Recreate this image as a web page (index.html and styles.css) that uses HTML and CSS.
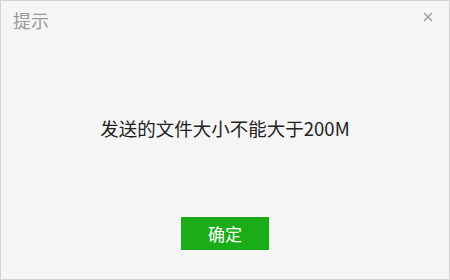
FILE: index.html
```html
<!DOCTYPE html>
<html>
<head>
<meta charset="utf-8">
<link rel="stylesheet" href="styles.css">
</head>
<body>
<div class="dialog">
  <div class="header">
    <span class="title">提示</span>
    <span class="close">
      <svg width="10" height="10" viewBox="0 0 10 10"><path d="M1 1L9 9M9 1L1 9" stroke="#999" stroke-width="1.4" fill="none"/></svg>
    </span>
  </div>
  <div class="content">发送的文件大小不能大于200M</div>
  <div class="footer">
    <button class="btn">确定</button>
  </div>
</div>
</body>
</html>
```
FILE: styles.css
```css
html, body {
  margin: 0;
  padding: 0;
}
body {
  font-family: "Noto Sans CJK SC", "Liberation Sans", sans-serif;
}
.dialog {
  width: 450px;
  height: 280px;
  box-sizing: border-box;
  border: 1px solid #d4d4d4;
  background: #f5f5f5;
  display: flex;
  flex-direction: column;
}
.header {
  display: flex;
  justify-content: space-between;
  align-items: flex-start;
  padding: 6px 16px 0 12px;
  height: 40px;
  box-sizing: border-box;
}
.title {
  font-size: 18px;
  color: #999;
  line-height: 26px;
}
.close {
  display: flex;
  margin-top: 5px;
}
.content {
  font-size: 18.5px;
  color: #222;
  text-align: center;
  line-height: 26px;
  margin-top: 74px;
}
.footer {
  display: flex;
  justify-content: center;
  margin-top: auto;
  padding-bottom: 29px;
}
.btn {
  width: 88px;
  height: 33px;
  border: none;
  background: #1aad19;
  color: #fff;
  font-family: "Noto Sans CJK SC", sans-serif;
  font-size: 17px;
  padding: 0;
}
```
